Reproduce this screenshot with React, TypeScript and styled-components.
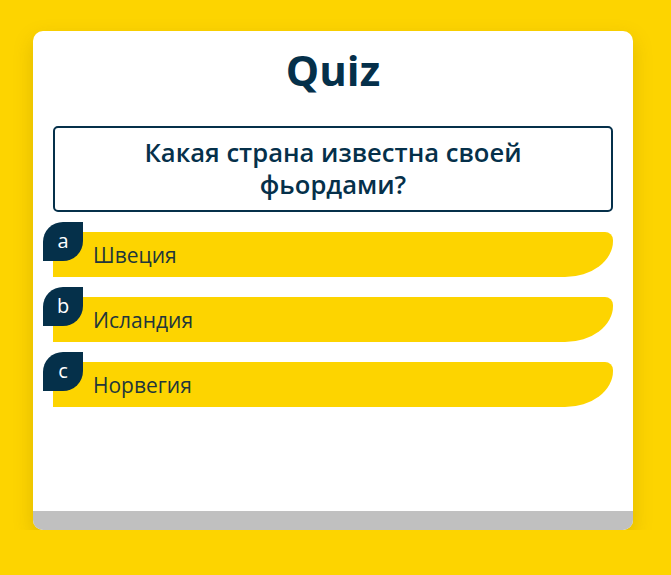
import React from "react";
import styled, { createGlobalStyle } from "styled-components";

const GlobalStyle = createGlobalStyle`
  html, body {
    margin: 0;
    padding: 0;
    background: #fdd400;
    font-family: "Open Sans", "Noto Sans", sans-serif;
  }
  #root {
    padding: 31px 0 0 33px;
  }
`;

const Card = styled.div`
  width: 600px;
  height: 499px;
  background: #ffffff;
  border-radius: 10px;
  box-shadow: 0 8px 20px rgba(120, 90, 0, 0.22);
  display: flex;
  flex-direction: column;
  overflow: hidden;
`;

const Body = styled.div`
  flex: 1;
  padding: 15px 20px 0 20px;
  display: flex;
  flex-direction: column;
`;

const Title = styled.h1`
  margin: 0;
  font-size: 42px;
  line-height: 48px;
  font-weight: 700;
  color: #05304a;
  text-align: center;
`;

const Question = styled.div`
  margin-top: 32px;
  border: 2px solid #05304a;
  border-radius: 5px;
  padding: 9px 40px;
  font-size: 25.6px;
  line-height: 32px;
  font-weight: 600;
  color: #05304a;
  text-align: center;
`;

const Options = styled.div`
  margin-top: 20px;
  display: flex;
  flex-direction: column;
  gap: 20px;
`;

const Option = styled.div`
  position: relative;
  height: 45px;
  background: #fdd400;
  border-radius: 0 8px 48px 0 / 0 8px 36px 0;
  display: flex;
  align-items: center;
  padding-left: 40px;
  font-size: 21px;
  color: #22363b;
`;

const Badge = styled.span`
  position: absolute;
  left: -10px;
  top: -10px;
  width: 40px;
  height: 39px;
  background: #05304a;
  border-radius: 20px 0 20px 0;
  color: #ffffff;
  font-size: 20px;
  display: flex;
  align-items: center;
  justify-content: center;
  padding-bottom: 3px;
  box-sizing: border-box;
`;

const Footer = styled.div`
  height: 19px;
  background: #c0c0c0;
`;

const answers = [
  { key: "a", text: "Швеция" },
  { key: "b", text: "Исландия" },
  { key: "c", text: "Норвегия" },
];

export default function App() {
  return (
    <>
      <GlobalStyle />
      <Card>
        <Body>
          <Title>Quiz</Title>
          <Question>Какая страна известна своей фьордами?</Question>
          <Options>
            {answers.map((a) => (
              <Option key={a.key}>
                <Badge>{a.key}</Badge>
                {a.text}
              </Option>
            ))}
          </Options>
        </Body>
        <Footer />
      </Card>
    </>
  );
}
